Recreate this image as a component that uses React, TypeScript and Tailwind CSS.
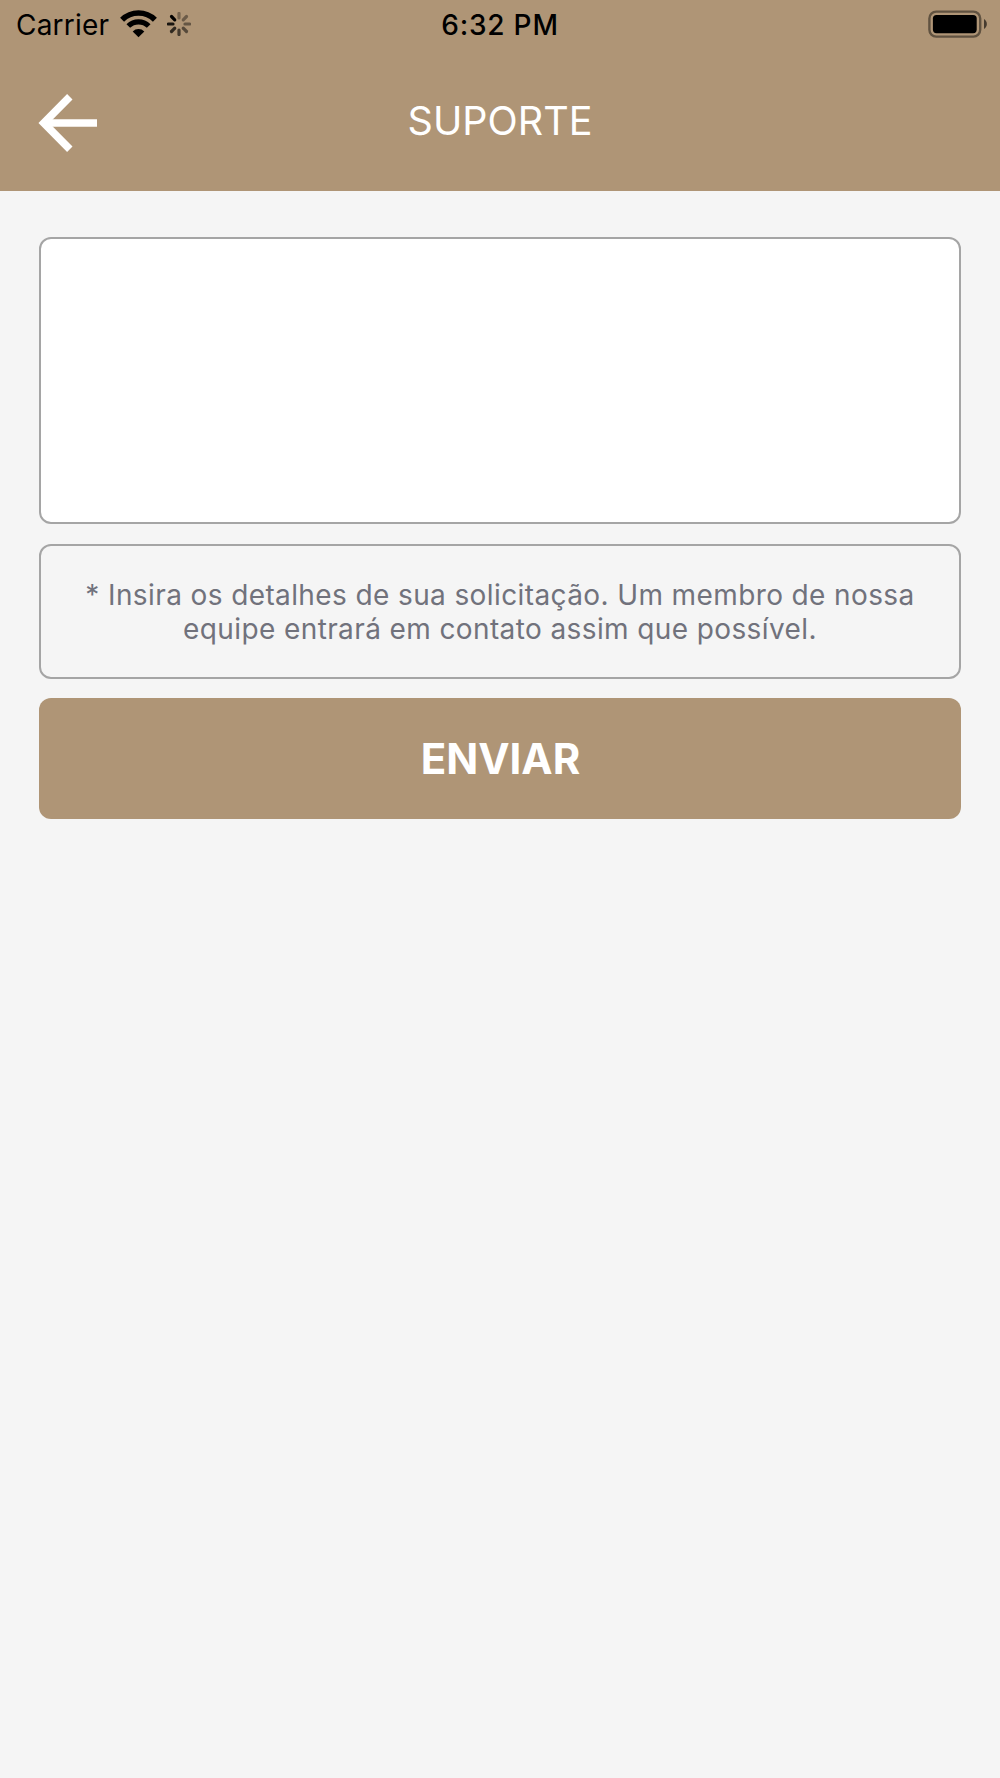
const spokes = [
  { angle: 0, opacity: 0.32 },
  { angle: 45, opacity: 0.38 },
  { angle: 90, opacity: 0.42 },
  { angle: 135, opacity: 0.5 },
  { angle: 180, opacity: 0.6 },
  { angle: 225, opacity: 0.72 },
  { angle: 270, opacity: 0.85 },
  { angle: 315, opacity: 1 },
]

function WifiIcon() {
  return (
    <svg className="mt-[10px] w-[37px] h-[28px]" viewBox="0 0 36 28" fill="none" stroke="#000">
      <path d="M1.6 9.8 A23.2 23.2 0 0 1 34.4 9.8" strokeWidth="5.6" />
      <path d="M7.8 16 A14.6 14.6 0 0 1 28.2 16" strokeWidth="5.2" />
      <path d="M18 27.2 L12.2 21.4 A8.2 8.2 0 0 1 23.8 21.4 Z" fill="#000" stroke="none" />
    </svg>
  )
}

function Spinner() {
  return (
    <svg className="ml-[10px] mt-[12px] w-[24px] h-[24px]" viewBox="-12 -12 24 24">
      {spokes.map((s) => (
        <line key={s.angle} x1="0" y1="-6" x2="0" y2="-10.6" stroke="#000" strokeWidth="3.2" strokeLinecap="round"
          opacity={s.opacity} transform={`rotate(${s.angle})`} />
      ))}
    </svg>
  )
}

function BatteryIcon() {
  return (
    <svg className="mt-[10px] w-[60px] h-[28px]" viewBox="0 0 60 28">
      <rect x="1.4" y="1.6" width="50.8" height="25" rx="6.8" fill="none" stroke="#000" strokeOpacity="0.45" strokeWidth="2.4" />
      <rect x="4.9" y="5" width="43.8" height="18.2" rx="3.6" fill="#000" />
      <path d="M56 9 C59.8 11.2 59.8 16.8 56 19 Z" fill="#000" fillOpacity="0.6" />
    </svg>
  )
}

export default function App() {
  return (
    <div className="min-h-[1778px] bg-[#f5f5f5] font-['Inter','Liberation_Sans',sans-serif]">
      <header className="h-[191px] bg-[#af9576]">
        {/* Status bar */}
        <div className="h-[50px] grid grid-cols-3 items-start text-[28px] leading-[51px] text-black">
          <div className="flex items-start pl-[16px]">
            <span className="w-[104px] whitespace-nowrap tracking-[0.2px]">Carrier</span>
            <WifiIcon />
            <Spinner />
          </div>
          <span className="text-center font-medium tracking-[0.8px]">6:32 PM</span>
          <div className="flex justify-end pr-[12px]">
            <BatteryIcon />
          </div>
        </div>

        {/* Nav bar */}
        <div className="h-[141px] grid grid-cols-3 px-[38px]">
          <button className="mt-[43px] w-[60px] h-[60px]" aria-label="Voltar">
            <svg className="w-[60px] h-[60px]" viewBox="0 0 60 60" fill="none" stroke="#fff" strokeWidth="7.6">
              <path d="M31.8 3.8 L5.8 30 L31.8 56.2" />
              <path d="M7 30 H59" />
            </svg>
          </button>
          <h1 className="mt-[46px] text-center text-[39.5px] leading-[50px] font-normal text-white">SUPORTE</h1>
        </div>
      </header>

      <main className="px-[39px] pt-[46px] flex flex-col">
        <textarea className="block w-full h-[287px] resize-none rounded-[12px] border-2 border-[#a5a5a5] bg-white p-4 text-[28px] outline-none" />

        <div className="mt-[20px] h-[135px] rounded-[12px] border-2 border-[#a5a5a5] pt-[32px]">
          <p className="text-center text-[28px] leading-[34px] text-[#71727c] tracking-[0.39px]">
            * Insira os detalhes de sua solicitação. Um membro de nossa
            <br />
            equipe entrará em contato assim que possível.
          </p>
        </div>

        <button className="mt-[19px] h-[121px] rounded-[12px] bg-[#af9576] pl-px text-[42px] font-bold text-white">ENVIAR</button>
      </main>
    </div>
  )
}
